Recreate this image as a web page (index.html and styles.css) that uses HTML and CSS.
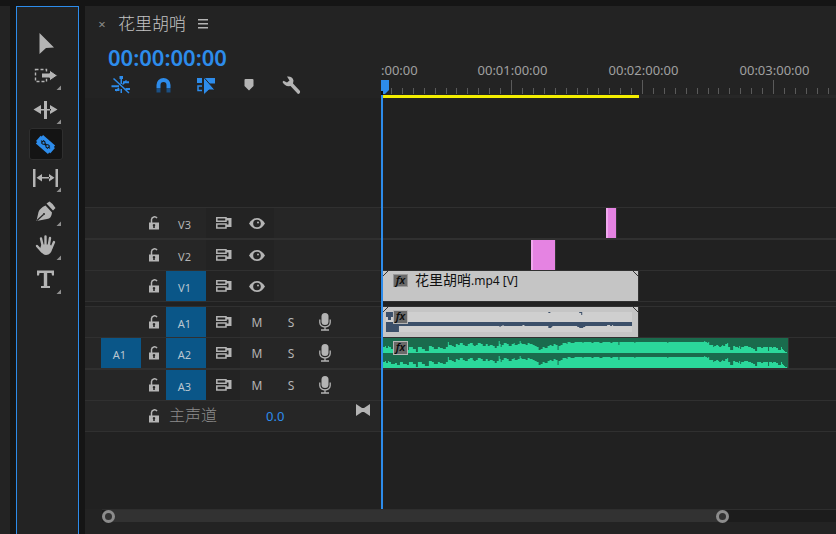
FILE: index.html
```html
<!DOCTYPE html>
<html lang="zh-CN">
<head>
  <meta charset="UTF-8" />
  <meta name="viewport" content="width=device-width, initial-scale=1.0" />
  <title>花里胡哨</title>
  <link rel="stylesheet" href="styles.css">
</head>
<body>
  <!-- shared icons -->
  <svg class="sprite" aria-hidden="true">
    <symbol id="lock" viewBox="0 0 14 16">
      <path d="M4.500 8V4.500A3 3 0 0 1 10 3.200" fill="none" stroke="currentColor" stroke-width="1.500"/>
      <path d="M2 7.500h10v7H2z" fill="currentColor"/>
      <path d="M7 9a1.300 1.300 0 0 1 .800 2.300V13H6.200v-1.700A1.300 1.300 0 0 1 7 9z" fill="#262626"/>
    </symbol>
    <symbol id="sync" viewBox="0 0 18 14">
      <path d="M2.800 1.800h9.200v3.400H2.800zM2.800 8h9.200v4H2.800z" fill="none" stroke="currentColor" stroke-width="1.500"/>
      <path d="M12 2h5.500v9H12V8.500h2.500v-4H12z" fill="currentColor"/>
    </symbol>
    <symbol id="eye" viewBox="0 0 18 14">
      <path d="M1 7.500Q4.500 2 9 2T17 7.500Q13.500 13 9 13T1 7.500z" fill="currentColor"/>
      <circle cx="9" cy="7.500" r="3.800" fill="#242424"/>
      <circle cx="10" cy="6.500" r="1" fill="currentColor"/>
    </symbol>
    <symbol id="mic" viewBox="0 0 14 20">
      <rect x="3.500" y="1" width="7" height="12" rx="3.500" fill="currentColor"/>
      <path d="M1.800 7.500v3a5.200 4.500 0 0 0 10.400 0v-3M7 15v3M3 18h8" fill="none" stroke="currentColor" stroke-width="1.300"/>
    </symbol>
  </svg>

  <div class="edge"></div>

  <div class="tools">
    <button class="tool" aria-label="选择工具">
      <svg viewBox="0 0 34 32"><path d="M10.500 7L25 21.500 17 22 10.500 28z"/></svg>
    </button>
    <button class="tool" aria-label="向前选择轨道工具">
      <svg viewBox="0 0 34 32">
        <path class="line" stroke-dasharray="3 2" d="M6.500 9.500h11v12h-11z"/>
        <path stroke="#232323" d="M12.500 13H20.500V10L28.500 15.500 20.500 21V18H12.500z"/>
        <path class="corner" d="M32 25.500V30h-4.500z"/>
      </svg>
    </button>
    <button class="tool" aria-label="波纹编辑工具">
      <svg viewBox="0 0 34 32">
        <path d="M15 7h3v18h-3zM4.500 15.500L12 11v9zM28.500 15.500L21 11v9zM11 15h11v1.500H11z"/>
        <path class="corner" d="M32 25.500V30h-4.500z"/>
      </svg>
    </button>
    <button class="tool active" aria-label="剃刀工具">
      <svg viewBox="0 0 34 32">
        <g transform="rotate(41 16.500 16.500)">
          <path d="M8.500 11h16v2H26v7h-1.500v2h-16v-2H7v-7h1.500z"/>
          <path fill="none" stroke="#141414" d="M10.500 16.500h2M20.500 16.500h2M12.500 15h2l1 1h2l1-1h2v3h-2l-1-1h-2l-1 1h-2z"/>
        </g>
      </svg>
    </button>
    <button class="tool" aria-label="外滑工具">
      <svg viewBox="0 0 34 32">
        <path d="M4 7h2.500v18H4zM26.500 7H29v18h-2.500zM7.500 15.800L13 12v7.500zM25.500 15.800L20 12v7.500zM12 15h9v1.500h-9z"/>
        <path class="corner" d="M32 25.500V30h-4.500z"/>
      </svg>
    </button>
    <button class="tool" aria-label="钢笔工具">
      <svg viewBox="0 0 34 32">
        <path d="M17.500 7.500L20.500 5.500Q24.500 8 26.500 12L24 14.500zM16.500 9.500L23 16.500Q22.500 22.500 18 23L7.500 25 9.500 16Q11 12 16.500 9.500z"/>
        <path d="M8 24.500L14.500 18.500" fill="none" stroke="#232323" stroke-width="1.200"/>
        <circle cx="15" cy="18" r="1" fill="#232323"/>
        <path class="corner" d="M32 25.500V30h-4.500z"/>
      </svg>
    </button>
    <button class="tool" aria-label="手形工具">
      <svg viewBox="0 0 34 32">
        <path d="M12 8.500L14 17M16.500 6.500V17M21 8L19.500 17M25 12L22 19M8 16L13 21.500" fill="none" stroke="#b4b4b4" stroke-width="2.400" stroke-linecap="round"/>
        <path d="M12.500 14.500h8.500l2.500 2.500Q22.500 25 17 25 14 25 10.500 20z"/>
        <path class="corner" d="M32 25.500V30h-4.500z"/>
      </svg>
    </button>
    <button class="tool" aria-label="文字工具">
      <svg viewBox="0 0 34 32">
        <path d="M8 6.500h17v5h-2L22.500 9H18.200v13H21v2h-9v-2h2.800V9H10.500L10 11.500H8z"/>
        <path class="corner" d="M32 25.500V30h-4.500z"/>
      </svg>
    </button>
  </div>

  <div class="timeline">
    <div class="tab">
      <button class="close" aria-label="关闭">×</button>
      <span class="tab-name">花里胡哨</span>
      <button class="menu" aria-label="面板菜单">
        <svg width="10" height="10" viewBox="0 0 10 10"><path d="M0 0h10v1.500H0zM0 4h10v1.500H0zM0 8h10v1.500H0z"/></svg>
      </button>
    </div>

    <div class="sequence">
      <div class="top">
        <div class="controls">
          <div class="timecode">00:00:00:00</div>
          <div class="options">
            <button class="on" aria-label="嵌套">
              <svg viewBox="0 0 24 24">
                <path d="M10.500 3H14v3h-3.500zM11.500 6H13v5h-1.500zM2.500 12.300H10v2H2.500zM14 8.300h6v2h-6zM6 16h4.500v2H6zM16.500 15H21v2h-4.500zM11.500 16H13v4h-1.500z"/>
                <path d="M4.500 5.500L20 20M13.500 11.500L17.500 7.500M10 15L7 18" fill="none" stroke="currentColor" stroke-width="1.500"/>
              </svg>
            </button>
            <button class="on" aria-label="对齐">
              <svg viewBox="0 0 24 24">
                <path d="M6.500 15V12a5 5 0 0 1 10 0v3" fill="none" stroke="currentColor" stroke-width="4"/>
                <path d="M4.500 15h4v4.500h-4zM14.500 15h4v4.500h-4z" fill="#1b4f82"/>
              </svg>
            </button>
            <button class="on" aria-label="链接选择项">
              <svg viewBox="0 0 24 24">
                <path d="M2 5h5v5H2zM8.500 5h11.500v5.500H8.500z"/>
                <path d="M7 13H3v4.500h4" fill="none" stroke="currentColor" stroke-width="1.500"/>
                <path d="M8.500 4L20 17H14L8.500 22z" stroke="#232323"/>
              </svg>
            </button>
            <button aria-label="添加标记">
              <svg viewBox="0 0 24 24"><path d="M7.500 6h7Q15.500 6 15.500 7v6L11 17.500 6.500 13V7Q6.500 6 7.500 6z"/></svg>
            </button>
            <button aria-label="时间轴显示设置">
              <svg viewBox="0 0 24 24"><path d="M6 3.500Q11.500 3 12.500 7.500L12 10.500 19 18Q19.500 20.500 17 21L9.500 13Q4 14 1.500 9L2.500 7.800 6 9.500 8.500 7.500z"/></svg>
            </button>
          </div>
        </div>
        <div class="ruler">
          <div class="ruler-labels">
            <span>:00:00</span>
            <span>00:01:00:00</span>
            <span>00:02:00:00</span>
            <span>00:03:00:00</span>
          </div>
          <svg class="ticks">
            <defs>
              <pattern id="minute" x="-1" y="0" width="131" height="15" patternUnits="userSpaceOnUse">
                <path d="M0 0h1v14H0zM11 8h1v6h-1zM22 8h1v6h-1zM33 8h1v6h-1zM44 8h1v6h-1zM55 8h1v6h-1zM66 8h1v6h-1zM76 8h1v6h-1zM87 8h1v6h-1zM98 8h1v6h-1zM109 8h1v6h-1zM120 8h1v6h-1z" fill="#5a5a5a"/>
              </pattern>
            </defs>
            <rect width="100%" height="15" fill="url(#minute)"/>
          </svg>
          <div class="work-area"><div class="work-bar" style="width: 256px"></div></div>
        </div>
      </div>

      <div class="tracks">
        <div class="track video">
          <div class="head">
            <span></span>
            <button aria-label="锁定 V3"><svg width="14" height="16"><use href="#lock"/></svg></button>
            <button class="target">V3</button>
            <button class="shade" aria-label="同步锁定 V3"><svg width="18" height="14"><use href="#sync"/></svg></button>
            <button class="shade" aria-label="切换 V3 输出"><svg width="18" height="14"><use href="#eye"/></svg></button>
          </div>
          <div class="lane"><div class="clip graphic" style="margin-left: 223px; width: 11px"></div></div>
        </div>
        <div class="track video thick">
          <div class="head">
            <span></span>
            <button aria-label="锁定 V2"><svg width="14" height="16"><use href="#lock"/></svg></button>
            <button class="target">V2</button>
            <button class="shade" aria-label="同步锁定 V2"><svg width="18" height="14"><use href="#sync"/></svg></button>
            <button class="shade" aria-label="切换 V2 输出"><svg width="18" height="14"><use href="#eye"/></svg></button>
          </div>
          <div class="lane"><div class="clip graphic" style="margin-left: 148px; width: 25px"></div></div>
        </div>
        <div class="track video last">
          <div class="head">
            <span></span>
            <button aria-label="锁定 V1"><svg width="14" height="16"><use href="#lock"/></svg></button>
            <button class="target on">V1</button>
            <button class="shade" aria-label="同步锁定 V1"><svg width="18" height="14"><use href="#sync"/></svg></button>
            <button class="shade" aria-label="切换 V1 输出"><svg width="18" height="14"><use href="#eye"/></svg></button>
          </div>
          <div class="lane">
            <div class="clip movie" style="width: 256px">
              <span class="fx">fx</span>
              <span class="clip-name">花里胡哨<small>.mp4 [V]</small></span>
            </div>
          </div>
        </div>

        <div class="track audio">
          <div class="head">
            <span></span>
            <button aria-label="锁定 A1"><svg width="14" height="16"><use href="#lock"/></svg></button>
            <button class="target on">A1</button>
            <button class="shade" aria-label="同步锁定 A1"><svg width="18" height="14"><use href="#sync"/></svg></button>
            <button class="letter">M</button>
            <button class="letter">S</button>
            <button aria-label="画外音 A1"><svg width="14" height="20"><use href="#mic"/></svg></button>
          </div>
          <div class="lane">
            <div class="clip movie" style="width: 256px">
              <svg class="wave" viewBox="0 0 256 30" preserveAspectRatio="none">
                <path d="M3 5h247v20H3z" fill="#cfcfcf"/>
                <path d="M3 5h7v5H8v3H5v-3H3zM3 15h247v4H16v6H3zM117 19h1v1h-1zM166 5h2v1h-2zM166 19h4v1h-1v1h-3zM197 5h3v3h-1V6h-2zM195 19h8v1h-2v1h-4v-1h-2z" fill="#3b4f69"/>
                <path d="M120 18h1v1h-1zM140 18h2v1h-2zM225 18h3v1h-3zM230 18h1v1h-1z" fill="#cfcfcf"/>
              </svg>
              <span class="fx light">fx</span>
            </div>
          </div>
        </div>
        <div class="track audio">
          <div class="head">
            <button class="target on">A1</button>
            <button aria-label="锁定 A2"><svg width="14" height="16"><use href="#lock"/></svg></button>
            <button class="target on">A2</button>
            <button class="shade" aria-label="同步锁定 A2"><svg width="18" height="14"><use href="#sync"/></svg></button>
            <button class="letter">M</button>
            <button class="letter">S</button>
            <button aria-label="画外音 A2"><svg width="14" height="20"><use href="#mic"/></svg></button>
          </div>
          <div class="lane">
            <div class="clip music" style="width: 406px">
              <svg class="wave" viewBox="0 0 406 30" preserveAspectRatio="none">
                <path id="channel" fill="#2bd89b" d="M0 15V9H2V8H3V10H5V8H6V9H8V11H12V10H14V12H17V9H20V11H24V12H26V9H30V11H33V14H35V9H39V11H42V13H46V8H49V9H51V11H55V9H57V10H60V11H63V9H65V4H66V7H69V8H71V9H73V6H75V7H77V5H80V7H82V8H85V6H87V5H90V7H91V8H93V7H95V5H98V6H100V8H103V6H105V8H107V7H110V8H112V10H114V8H116V3H117V6H118V9H119V7H121V5H124V6H126V8H129V6H131V5H132V7H135V6H137V3H138V5H139V6H143V7H145V5H147V6H150V7H152V8H154V9H156V12H158V11H160V9H162V10H165V8H167V7H169V8H171V6H173V7H175V12H176V8H178V7H180V5H184V6H185V4H188V5H192V4H200V5H201V4H209V5H211V4H217V5H220V4H228V5H230V4H236V7H237V4H252V5H253V4H285V5H286V4H322V3H323V4H325V5H326V4H327V7H331V9H332V8H334V7H336V8H337V9H339V8H340V7H341V8H343V6H345V5H346V9H348V12H351V8H353V9H356V10H357V8H358V11H359V9H362V8H366V9H369V10H371V11H373V13H375V9H379V10H381V9H386V13H387V9H390V10H391V9H394V10H396V12H399V9H400V11H401V12H402V13H403V14H405V15z"/>
                <use href="#channel" y="15"/>
              </svg>
              <span class="fx light">fx</span>
            </div>
          </div>
        </div>
        <div class="track audio thick last">
          <div class="head">
            <span></span>
            <button aria-label="锁定 A3"><svg width="14" height="16"><use href="#lock"/></svg></button>
            <button class="target on">A3</button>
            <button class="shade" aria-label="同步锁定 A3"><svg width="18" height="14"><use href="#sync"/></svg></button>
            <button class="letter">M</button>
            <button class="letter">S</button>
            <button aria-label="画外音 A3"><svg width="14" height="20"><use href="#mic"/></svg></button>
          </div>
          <div class="lane"></div>
        </div>
        <div class="track master">
          <div class="head">
            <span></span>
            <button aria-label="锁定主声道"><svg width="14" height="16"><use href="#lock"/></svg></button>
            <span class="master-name">主声道</span>
            <span class="level">0.0</span>
            <button class="mix" aria-label="声道设置"><svg width="14" height="12" viewBox="0 0 14 12"><path d="M0 0L6 4h2l6-4v12L8 8H6l-6 4z"/></svg></button>
          </div>
          <div class="lane"></div>
        </div>
      </div>

      <div class="playhead">
        <svg width="8" height="15" viewBox="0 0 8 15"><path d="M0 0h8v10L4 14H0z" fill="#2d8ceb"/><path d="M0 11h2v4H0z" fill="#0a0a0a"/></svg>
      </div>
    </div>

    <div class="scrollbar">
      <div class="thumb" style="width: 85.4%">
        <button class="handle" aria-label="缩放起点"></button>
        <button class="handle" aria-label="缩放终点"></button>
      </div>
    </div>
  </div>
</body>
</html>
```
FILE: styles.css
```css
* { box-sizing: border-box; }
body {
  margin: 0;
  padding-top: 6px;
  height: 100vh;
  display: flex;
  gap: 6px;
  background-color: #151515;
  color: #b4b4b4;
  font-family: "Noto Sans", "Noto Sans CJK SC", sans-serif;
  font-size: 12px;
  overflow: hidden;
}
button {
  background: none;
  border: none;
  padding: 0;
  color: inherit;
  font: inherit;
  cursor: pointer;
}
svg {
  display: block;
  fill: currentColor;
}
.sprite {
  position: absolute;
  width: 0;
  height: 0;
}
.edge {
  width: 10px;
  background-color: #232323;
}

/* tool panel */
.tools {
  width: 63px;
  display: flex;
  flex-direction: column;
  gap: 2px;
  padding: 19px 0 0 12px;
  background-color: #232323;
  border: 1px solid #2d8ceb;
  border-bottom: none;
}
.tool {
  width: 34px;
  height: 32px;
  border-radius: 3px;
}
.tool.active {
  background-color: #141414;
  color: #2d8ceb;
  box-shadow: inset 0 0 0 1px #2e2e2e;
}
.tool .line {
  fill: none;
  stroke: currentColor;
  stroke-width: 1.4;
}
.tool .corner { fill: #8f8f8f; }

/* timeline panel */
.timeline {
  flex: 1;
  min-width: 0;
  display: flex;
  flex-direction: column;
  background-color: #232323;
  padding-bottom: 12px;
}
.tab {
  display: flex;
  align-items: center;
  height: 35px;
  padding-left: 12px;
}
.close {
  width: 10px;
  font-size: 13px;
  color: #8c8c8c;
}
.tab-name {
  margin: 0 12px 0 11px;
  font-size: 17px;
  font-weight: 300;
  line-height: 24px;
  color: #c4c4c4;
}
.sequence {
  flex: 1;
  position: relative;
  background-color: #212121;
}
.top {
  display: grid;
  grid-template-columns: 296px 1fr;
  background-color: #232323;
}
.timecode {
  padding-left: 23px;
  line-height: 32px;
  font-size: 22px;
  font-weight: 600;
  color: #2d8ceb;
}
.options {
  display: flex;
  padding-left: 14px;
}
.options button {
  width: 43px;
  padding: 0 9px 0 10px;
}
.options svg {
  width: 24px;
  height: 24px;
}
.options .on { color: #2d8ceb; }
.ruler {
  min-width: 0;
  padding-top: 19px;
  overflow: hidden;
}
.ruler-labels {
  display: flex;
  font-size: 13px;
  line-height: 20px;
  color: #a0a0a0;
}
.ruler-labels span {
  flex: none;
  width: 131px;
  text-align: center;
}
.ruler-labels span:first-child {
  width: 66px;
  text-align: left;
}
.ticks {
  width: 100%;
  height: 15px;
}
.work-area {
  padding-left: 2px;
  background-color: #272727;
}
.work-bar {
  height: 3px;
  background-color: #f4ee00;
}

/* tracks */
.tracks { padding-top: 109px; }
.track {
  display: grid;
  grid-template-columns: 296px 1fr;
  border-top: 1px solid #303030;
}
.track.thick { border-top-width: 2px; }
.track.video.last {
  border-bottom: 1px solid #303030;
  margin-bottom: 4px;
}
.track.master { border-bottom: 1px solid #303030; }
.head {
  display: grid;
  grid-template-columns: 40px 25px 40px 34px 34px 34px 34px;
  height: 30px;
  padding-left: 16px;
  background-color: #262626;
  border-right: 1px solid #1c1c1c;
}
.head button {
  display: flex;
  align-items: center;
  justify-content: center;
}
.head .target {
  padding: 2px 3px 0 0;
  font-size: 11px;
}
.head .target.on {
  background-color: #0a5688;
  color: #b9c6d0;
}
.head .shade { background-color: #232323; }
.head .letter { padding-top: 1px; }
.master .head { grid-template-columns: 40px 25px 100px 80px 34px; }
.master-name {
  padding-left: 3px;
  font-size: 16px;
  font-weight: 300;
  line-height: 28px;
  color: #8c8c8c;
}
.level {
  font-size: 13px;
  line-height: 30px;
  color: #2d8ceb;
}
.head .mix {
  align-items: flex-start;
  padding-top: 3px;
}
.lane {
  padding-left: 2px;
  overflow: hidden;
}
.clip {
  position: relative;
  display: flex;
  height: 30px;
  padding: 3px 0 0 10px;
  border-right: 1px solid #333;
}
.graphic {
  background-color: #e583e2;
  box-shadow: inset 2px 0 #f0a8ee;
}
.movie {
  background:
    linear-gradient(135deg, transparent 3px, #333 3px, #333 4px, transparent 4px) left top / 6px 6px no-repeat,
    linear-gradient(225deg, transparent 3px, #333 3px, #333 4px, transparent 4px) right top / 6px 6px no-repeat,
    #c5c5c5;
}
.music { background-color: #1a6b4d; }
.wave {
  position: absolute;
  inset: 0;
  width: 100%;
  height: 100%;
}
.fx {
  position: relative;
  width: 15px;
  height: 13px;
  background-color: #6a6a6a;
  border: 1px solid #999;
  color: #0c0c0c;
  font-size: 11px;
  font-style: italic;
  font-weight: 600;
  line-height: 10px;
  text-align: center;
}
.fx.light {
  height: 14px;
  border-color: #b5b5b5;
}
.clip-name {
  margin-left: 7px;
  font-size: 14px;
  line-height: 12px;
  color: #111;
}
.clip-name small { font-size: 12px; }

/* overlays every lane */
.playhead {
  position: absolute;
  top: 39px;
  bottom: 0;
  left: 296px;
  width: 2px;
  background-color: #2d8ceb;
}

/* zoom bar */
.scrollbar {
  height: 13px;
  margin-left: 17px;
  background-color: #1c1c1c;
  border-top: 1px solid #2e2e2e;
}
.thumb {
  display: flex;
  justify-content: space-between;
  height: 12px;
  background-color: #323232;
  border-radius: 6px;
}
.handle {
  width: 13px;
  height: 13px;
  border: 3px solid #8c8c8c;
  border-radius: 50%;
}
```
